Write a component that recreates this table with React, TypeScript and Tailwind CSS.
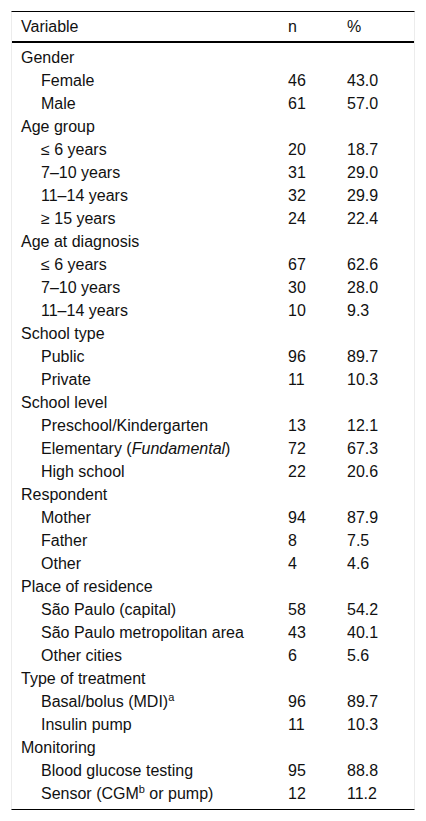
import React from "react";

type Row = { label: React.ReactNode; n?: string; p?: string; sub?: boolean };

const Sup = ({ children }: { children: React.ReactNode }) => (
  <sup className="text-[11px] relative -top-[6px]">{children}</sup>
);

const rows: Row[] = [
  { label: "Gender" },
  { label: "Female", n: "46", p: "43.0", sub: true },
  { label: "Male", n: "61", p: "57.0", sub: true },
  { label: "Age group" },
  { label: "≤ 6 years", n: "20", p: "18.7", sub: true },
  { label: "7–10 years", n: "31", p: "29.0", sub: true },
  { label: "11–14 years", n: "32", p: "29.9", sub: true },
  { label: "≥ 15 years", n: "24", p: "22.4", sub: true },
  { label: "Age at diagnosis" },
  { label: "≤ 6 years", n: "67", p: "62.6", sub: true },
  { label: "7–10 years", n: "30", p: "28.0", sub: true },
  { label: "11–14 years", n: "10", p: "9.3", sub: true },
  { label: "School type" },
  { label: "Public", n: "96", p: "89.7", sub: true },
  { label: "Private", n: "11", p: "10.3", sub: true },
  { label: "School level" },
  { label: "Preschool/Kindergarten", n: "13", p: "12.1", sub: true },
  {
    label: (
      <>
        Elementary (<i>Fundamental</i>)
      </>
    ),
    n: "72",
    p: "67.3",
    sub: true,
  },
  { label: "High school", n: "22", p: "20.6", sub: true },
  { label: "Respondent" },
  { label: "Mother", n: "94", p: "87.9", sub: true },
  { label: "Father", n: "8", p: "7.5", sub: true },
  { label: "Other", n: "4", p: "4.6", sub: true },
  { label: "Place of residence" },
  { label: "São Paulo (capital)", n: "58", p: "54.2", sub: true },
  { label: "São Paulo metropolitan area", n: "43", p: "40.1", sub: true },
  { label: "Other cities", n: "6", p: "5.6", sub: true },
  { label: "Type of treatment" },
  {
    label: (
      <>
        Basal/bolus (MDI)<Sup>a</Sup>
      </>
    ),
    n: "96",
    p: "89.7",
    sub: true,
  },
  { label: "Insulin pump", n: "11", p: "10.3", sub: true },
  { label: "Monitoring" },
  { label: "Blood glucose testing", n: "95", p: "88.8", sub: true },
  {
    label: (
      <>
        Sensor (CGM<Sup>b</Sup> or pump)
      </>
    ),
    n: "12",
    p: "11.2",
    sub: true,
  },
];

export default function App() {
  return (
    <div className="bg-white w-[426px] h-[821px] pt-[11px] pl-[11px] text-[16px] text-[#111] [font-family:'Liberation_Sans',Arial,sans-serif]">
      <div className="w-[404px] border-t border-b border-t-black border-b-black border-x border-x-[#ececec]">
        <div className="grid grid-cols-[276px_59px_1fr] h-[31px] items-center border-b-2 border-black">
          <div className="pl-[9px]">Variable</div>
          <div>n</div>
          <div>%</div>
        </div>
        <div className="pt-[3px] pb-[4px]">
          {rows.map((r, i) => (
            <div key={i} className="grid grid-cols-[276px_59px_1fr] h-[23px] items-center leading-[23px]">
              <div className={r.sub ? "pl-[29px]" : "pl-[9px]"}>{r.label}</div>
              <div>{r.n}</div>
              <div>{r.p}</div>
            </div>
          ))}
        </div>
      </div>
    </div>
  );
}
